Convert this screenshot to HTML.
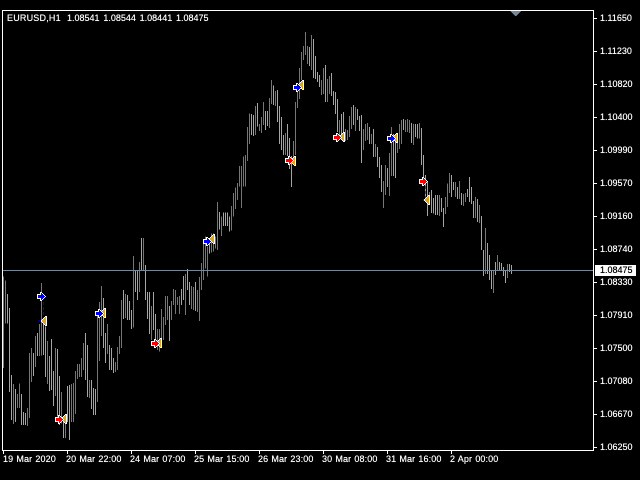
<!DOCTYPE html>
<html><head><meta charset="utf-8">
<style>
html,body{margin:0;padding:0;background:#000;width:640px;height:480px;overflow:hidden}
body{position:relative;font-family:"Liberation Sans",sans-serif;font-size:9px;color:#fff}
.t{position:absolute;white-space:pre;line-height:11px;height:11px;text-shadow:0 0 .4px}
.y{left:600px}
.x{top:454px;word-spacing:.6px;letter-spacing:.1px}
svg{position:absolute;left:0;top:0}
</style></head><body>
<svg width="640" height="480" viewBox="0 0 640 480" shape-rendering="crispEdges" fill="none">
<defs>
<g id="ab"><path d="M0 2H3V0H5V1H6V2H7V3H8V4H9V5H8V6H7V7H6V8H5V9H3V7H0Z" fill="#fff"/><path d="M1 3H4V1H5V2H6V3H7V4H8V5H7V6H6V7H5V8H4V6H1Z" fill="#0000ff"/></g>
<g id="ar"><path d="M0 2H3V0H5V1H6V2H7V3H8V4H9V5H8V6H7V7H6V8H5V9H3V7H0Z" fill="#fff"/><path d="M1 3H4V1H5V2H6V3H7V4H8V5H7V6H6V7H5V8H4V6H1Z" fill="#ff0000"/></g>
<g id="ay"><path d="M0 4H1V3H2V2H3V1H4V0H6V10H4V9H3V8H2V7H1V6H0Z" fill="#fff"/><path d="M1 4H2V3H3V2H4V1H5V9H4V8H3V7H2V6H1Z" fill="#daa520"/></g>
</defs>
<g transform="translate(.167 240) scale(.33333)" stroke-width="3">
<path stroke="#4682b4" d="M10 110V384M16 122V250M40 432V552M52 462V504M58 430V504M82 504V558M88 339V534M94 324V426M106 288V381M118 252V348M124 129V346M142 303V432M166 324V468M184 456V550M196 540V594M214 432V546M220 429V546M226 393V522M232 372V417M238 372V411M244 354V411M250 309V390M268 420V474M292 225V486M298 186V363M304 138V288M322 252V342M346 366V396M352 321V390M358 288V342M364 180V324M376 162V234M400 48V262M418 66V156M430 -6V90M454 198V300M472 267V330M478 267V335M484 207V300M490 231V300M496 168V255M502 168V240M514 183V240M520 147V195M526 150V222M532 171V195M538 168V222M556 102V225M574 138V207M580 141V210M592 150V216M598 111V243M604 69V150"/>
<path stroke="#e08e80" d="M22 162V250M28 204V456M34 405V540M46 447V546M64 462V555M70 516V555M76 519V555M100 339V408M112 279V348M130 250V345M136 260V411M148 348V453M154 297V450M160 393V498M172 327V530M178 408V555M190 530V594M202 438V546M208 435V600M256 279V420M262 315V471M274 420V507M280 444V525M286 447V525M310 174V324M316 279V369M328 315V390M334 324V390M340 354V399M370 150V237M382 165V240M388 183V240M394 210V267M406 90V156M412 90V180M424 -6V90M436 75V180M442 156V237M448 156V282M460 156V270M466 222V300M508 198V303M544 147V195M550 108V180M562 87V150M568 126V195M586 126V213"/>
</g>
<g transform="translate(200.167 20) scale(.33333)" stroke-width="3">
<path stroke="#4682b4" d="M10 670V780M16 650V745M22 680V770M34 640V698M40 640V695M46 650V685M52 546V690M64 590V648M94 558V632M100 519V590M106 502V567M112 489V540M118 438V500M124 438V564M130 410V500M136 405V500M142 321V423M148 280V372M166 258V345M178 312V333M184 291V339M190 246V315M208 234V324M214 180V252M226 213V258M256 339V405M280 363V414M286 246V405M292 192V264M298 144V237M304 96V180M310 78V120M316 36V105M322 78V132M334 45V150M364 180V225M370 144V222M382 177V246M388 168V222M418 300V360M436 327V363M442 330V360M448 288V351M454 261V327M466 261V333M490 327V390M496 312V363M502 309V360M514 342V372M526 372V411M550 483V564M556 435V525M568 399V528M574 321V468M592 345V399M598 312V387M604 300V372M616 300V336M622 297V336M628 300V339"/>
<path stroke="#e08e80" d="M28 660V700M58 576V628M70 578V618M76 578V618M82 578V618M88 590V635M154 282V345M160 285V348M172 249V320M196 273V330M202 273V318M220 197V255M232 210V306M238 258V372M244 291V390M250 345V405M262 312V408M268 354V447M274 408V501M328 81V138M340 57V174M346 108V177M352 156V186M358 165V201M376 135V246M394 159V228M400 213V255M406 216V282M412 237V336M424 282V342M430 276V360M460 255V315M472 267V300M478 288V333M484 285V429M508 321V372M520 327V411M532 381V441M538 411V474M544 435V516M562 444V501M580 342V468M586 360V474M610 297V330M634 309V369"/>
</g>
<g transform="translate(400.167 100) scale(.33333)" stroke-width="3">
<path stroke="#4682b4" d="M40 72V135M58 69V115M88 276V310M118 285V348M136 291V342M142 250V321M148 219V279M166 246V291M178 243V297M190 282V318M196 279V306M226 291V354M238 315V369M256 384V522M280 510V579M292 465V510M322 492V534"/>
<path stroke="#e08e80" d="M46 72V111M52 72V115M64 84V195M70 165V240M76 225V290M82 243V348M94 270V339M100 294V340M106 285V345M112 285V345M124 294V336M130 324V381M154 225V291M160 246V270M172 261V297M184 279V315M202 267V291M208 231V306M214 261V312M220 303V354M232 297V366M244 348V450M250 450V528M262 429V522M268 465V540M274 510V567M286 486V525M298 486V510M304 489V510M310 501V528M316 510V549M328 492V516M334 495V522"/>
</g>
<path d="M3 270.5H593" stroke="#778899"/>
<path d="M43.5 302V321M41 321H37" stroke="#0000ff" stroke-dasharray="3 2"/>
<path d="M425.5 186V200M426 200H422" stroke="#ff0000" stroke-dasharray="3 2"/>
<use href="#ab" x="37" y="292"/><use href="#ay" x="41" y="316"/>
<use href="#ay" x="61" y="414"/><use href="#ar" x="55" y="415"/>
<use href="#ay" x="100" y="308"/><use href="#ab" x="95" y="309"/>
<use href="#ay" x="156" y="338"/><use href="#ar" x="151" y="339"/>
<use href="#ay" x="209" y="234"/><use href="#ab" x="203" y="237"/>
<use href="#ay" x="298" y="80"/><use href="#ab" x="293" y="83"/>
<use href="#ay" x="290" y="156"/><use href="#ar" x="285" y="156"/>
<use href="#ay" x="339" y="132"/><use href="#ar" x="333" y="133"/>
<use href="#ay" x="392" y="133"/><use href="#ab" x="387" y="134"/>
<use href="#ar" x="419" y="177"/><use href="#ay" x="424" y="195"/>
<path d="M2.5 10.5H593.5V450.5H2.5Z" stroke="#fff"/>
<path d="M510 11H521L516 16H515Z" fill="#778899"/>
<path stroke="#fff" d="M594 18.5H597M594 51.5H597M594 84.5H597M594 117.5H597M594 150.5H597M594 183.5H597M594 216.5H597M594 249.5H597M594 282.5H597M594 315.5H597M594 348.5H597M594 381.5H597M594 414.5H597M594 447.5H597M3.5 451V454M67.5 451V454M131.5 451V454M195.5 451V454M259.5 451V454M323.5 451V454M387.5 451V454M451.5 451V454"/>
<rect x="595" y="265" width="41" height="11" fill="#fff"/>
</svg>
<div class="t" style="left:7px;top:13px;letter-spacing:.2px">EURUSD,H1</div>
<div class="t" style="left:67px;top:13px;word-spacing:1.3px">1.08541 1.08544 1.08441 1.08475</div>
<div class="t y" style="top:13px">1.11650</div>
<div class="t y" style="top:46px">1.11230</div>
<div class="t y" style="top:79px">1.10820</div>
<div class="t y" style="top:112px">1.10400</div>
<div class="t y" style="top:145px">1.09990</div>
<div class="t y" style="top:178px">1.09570</div>
<div class="t y" style="top:211px">1.09160</div>
<div class="t y" style="top:244px">1.08740</div>
<div class="t y" style="top:265px;color:#000">1.08475</div>
<div class="t y" style="top:277px">1.08330</div>
<div class="t y" style="top:310px">1.07910</div>
<div class="t y" style="top:343px">1.07500</div>
<div class="t y" style="top:376px">1.07080</div>
<div class="t y" style="top:409px">1.06670</div>
<div class="t y" style="top:442px">1.06250</div>
<div class="t x" style="left:3px">19 Mar 2020</div>
<div class="t x" style="left:66px">20 Mar 22:00</div>
<div class="t x" style="left:130px">24 Mar 07:00</div>
<div class="t x" style="left:194px">25 Mar 15:00</div>
<div class="t x" style="left:258px">26 Mar 23:00</div>
<div class="t x" style="left:322px">30 Mar 08:00</div>
<div class="t x" style="left:386px">31 Mar 16:00</div>
<div class="t x" style="left:450px">2 Apr 00:00</div>
</body></html>
